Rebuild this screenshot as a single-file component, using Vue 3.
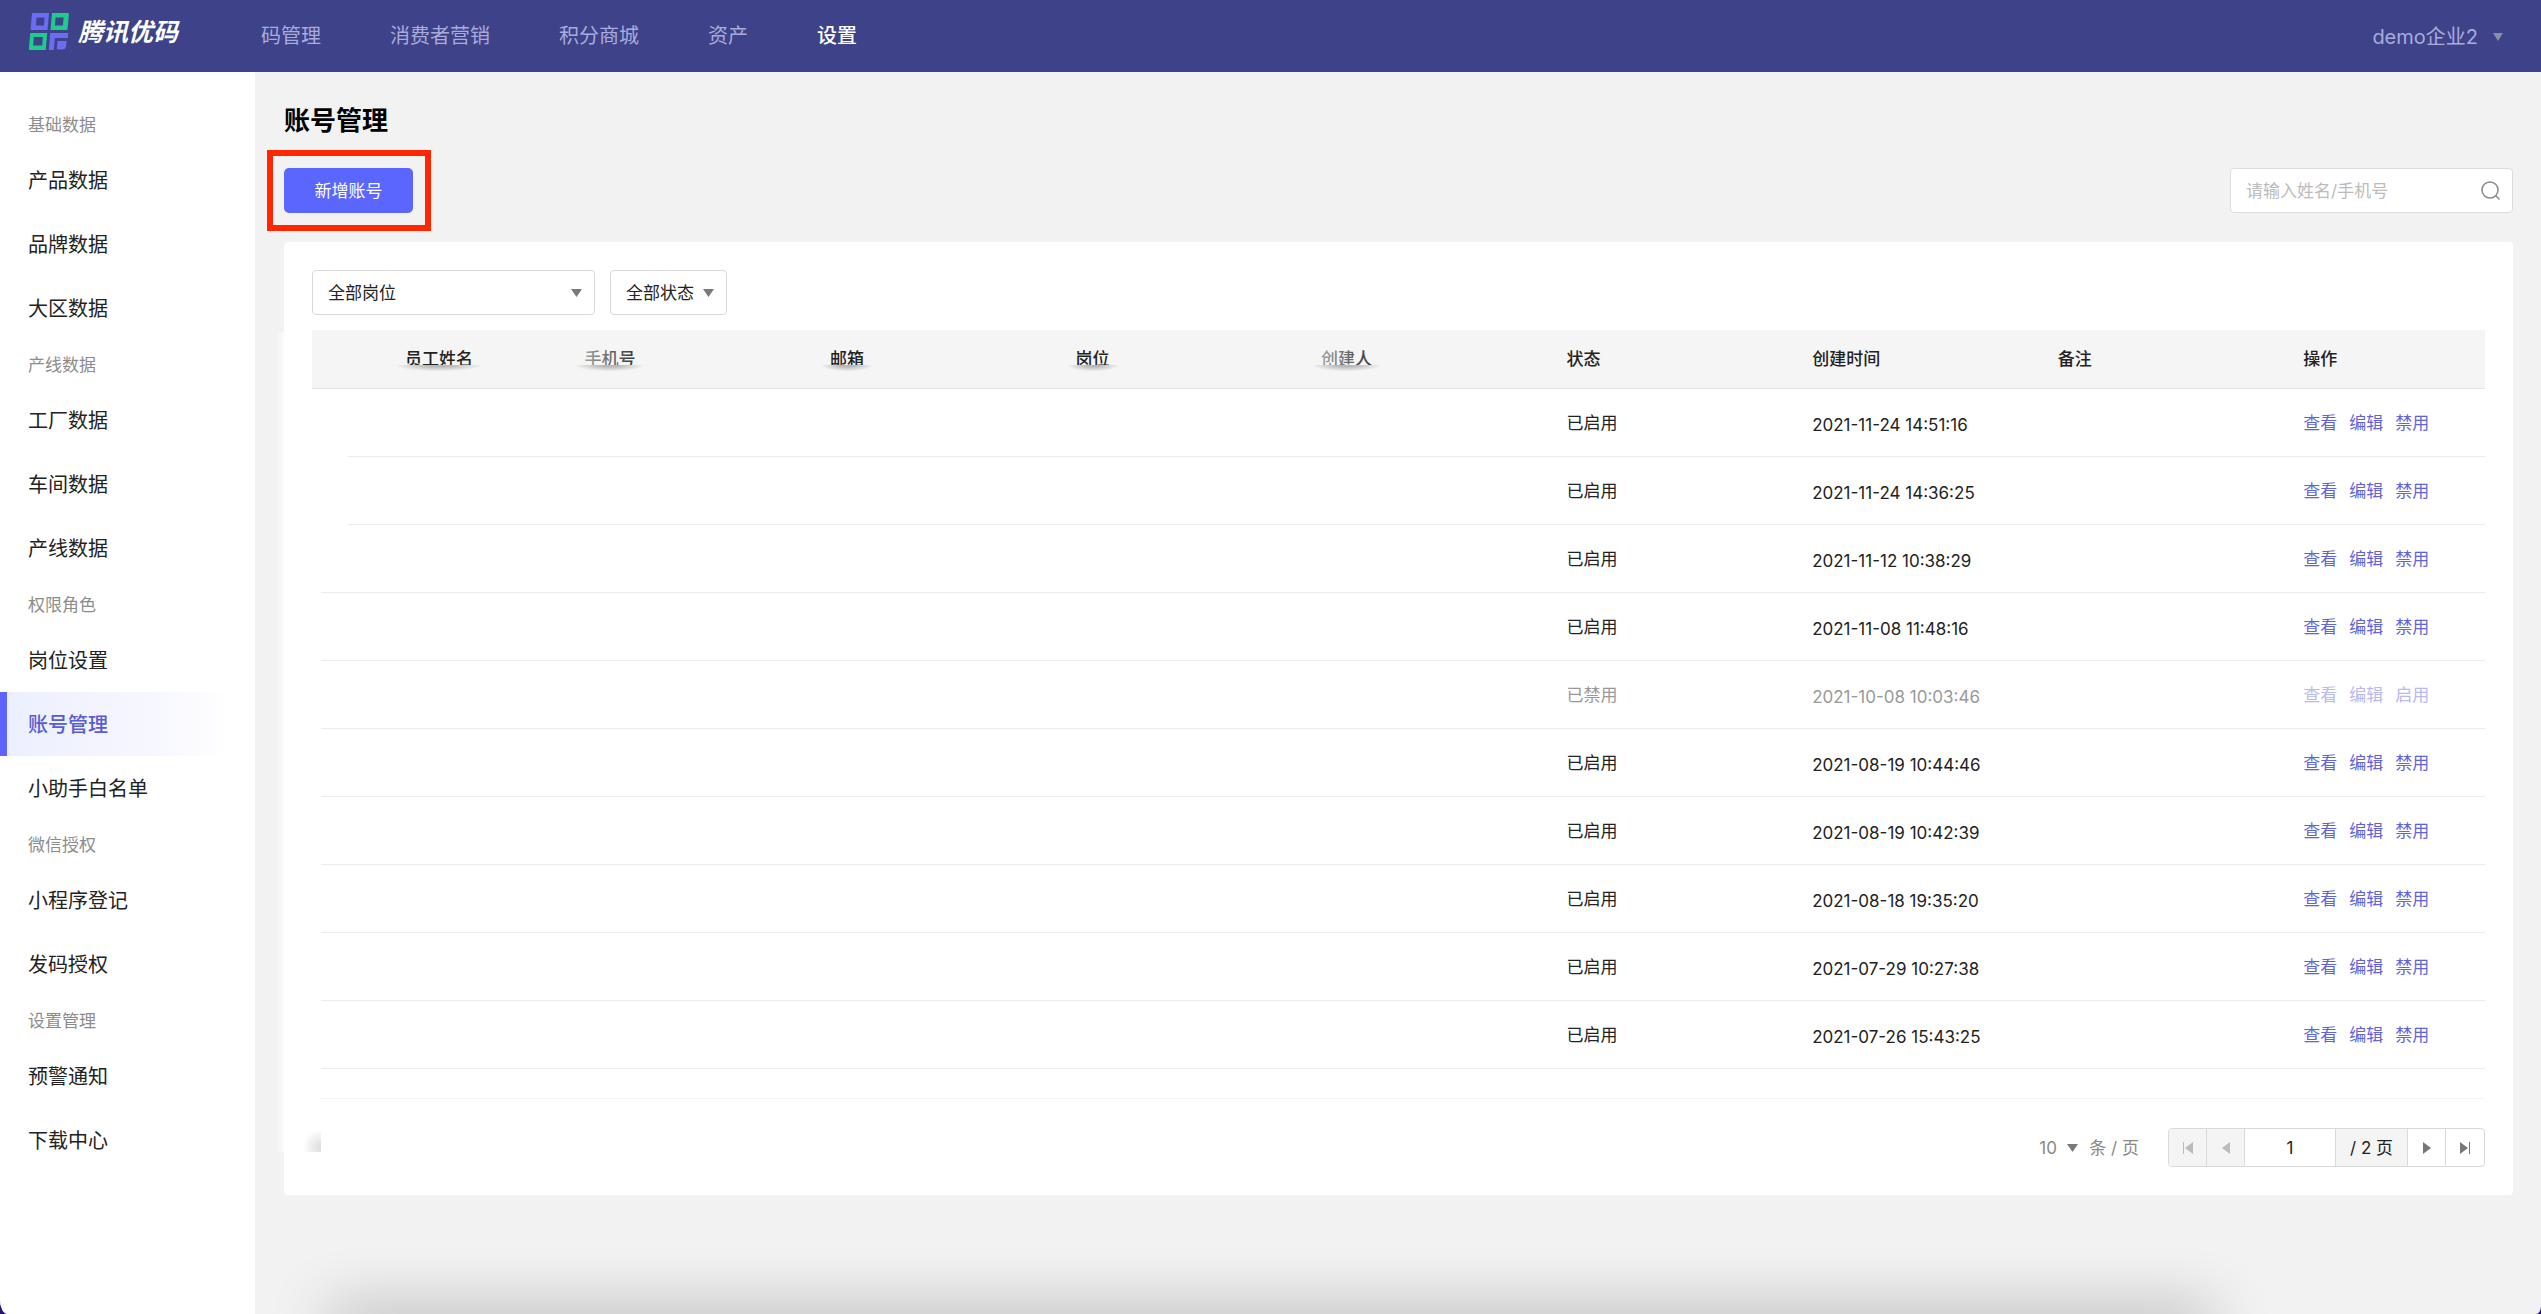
<template>
  <div class="page">

    <!-- 顶部导航 -->
    <header class="top-bar">
      <a href="#" class="brand">
        <svg class="brand-logo" width="42" height="40" viewBox="0 0 42 40" aria-hidden="true">
          <g transform="translate(4 1) skewX(-5)" fill-rule="evenodd">
            <path fill="#6a6cf6" d="M1 0H17V17H1a1 1 0 0 1-1-1V1a1 1 0 0 1 1-1ZM5 4.500V12.500H13V4.500Z" />
            <path fill="#1fcb8c" d="M20 0H36a1 1 0 0 1 1 1V16a1 1 0 0 1-1 1H20ZM24 4.500V12.500H32V4.500Z" />
            <path fill="#1fcb8c" d="M0 20H17V37H1a1 1 0 0 1-1-1ZM4 24V32.500H13V24Z" />
            <path fill="#6a6cf6" d="M20 20H38V25H25V37H20ZM28 28H37V33a3.500 3.500 0 0 1-3.500 3.500H28Z" />
          </g>
        </svg>
        <span class="brand-name">腾讯优码</span>
      </a>
      <nav class="top-nav">
        <a v-for="item in navItems" :key="item" href="#" :class="{ active: item === activeNav }" @click.prevent="activeNav = item">{{ item }}</a>
      </nav>
      <button class="company-btn">
        <span>demo企业2</span>
        <svg width="10" height="8" viewBox="0 0 10 8"><path fill="#8b8ca6" d="M0 0H10L5 8Z" /></svg>
      </button>
    </header>

    <div class="body">

      <!-- 左侧菜单 -->
      <aside class="side-menu">
        <div v-for="group in menuGroups" :key="group.title">
          <div class="menu-title">{{ group.title }}</div>
          <a v-for="item in group.items" :key="group.title + item" href="#" class="menu-item" :class="{ active: item === activeMenu }" @click.prevent="activeMenu = item">{{ item }}</a>
        </div>
      </aside>

      <!-- 右侧内容 -->
      <main class="content">
        <h1 class="page-title">账号管理</h1>

        <div class="toolbar">
          <div class="add-wrap">
            <button class="add-btn">新增账号</button>
          </div>
          <div class="search-box">
            <input v-model="keyword" type="text" placeholder="请输入姓名/手机号" aria-label="请输入姓名/手机号" />
            <svg width="20" height="20" viewBox="0 0 20 20" fill="none" stroke="#888" stroke-width="1.500">
              <circle cx="9" cy="9" r="8" />
              <path d="M14.500 14.500L18.500 18.500" />
            </svg>
          </div>
        </div>

        <section class="card">
          <div class="filters">
            <div class="select-box post">
              <select v-model="post" aria-label="岗位"><option>全部岗位</option></select>
              <svg width="11" height="8" viewBox="0 0 11 8"><path fill="#7a7a7a" d="M0 0H11L5.500 8Z" /></svg>
            </div>
            <div class="select-box status">
              <select v-model="status" aria-label="状态"><option>全部状态</option></select>
              <svg width="11" height="8" viewBox="0 0 11 8"><path fill="#7a7a7a" d="M0 0H11L5.500 8Z" /></svg>
            </div>
          </div>

          <table class="account-table">
            <thead>
              <tr>
                <th v-for="col in columns" :key="col.name" scope="col" :class="col.cell">
                  <span :class="col.style">{{ col.name }}</span>
                </th>
              </tr>
            </thead>
            <tbody>
              <tr v-for="row in rows" :key="row.time" :class="{ disabled: !row.enabled }">
                <td></td>
                <td></td>
                <td></td>
                <td></td>
                <td></td>
                <td>{{ row.enabled ? '已启用' : '已禁用' }}</td>
                <td class="time">{{ row.time }}</td>
                <td></td>
                <td>
                  <div class="actions">
                    <a href="#">查看</a>
                    <a href="#">编辑</a>
                    <a href="#">{{ row.enabled ? '禁用' : '启用' }}</a>
                  </div>
                </td>
              </tr>
            </tbody>
          </table>

          <!-- 分页 -->
          <div class="table-footer">
            <label class="page-size">
              <select v-model="pageSize"><option>10</option></select>
              <svg width="11" height="8" viewBox="0 0 11 8"><path fill="#7a7a7a" d="M0 0H11L5.500 8Z" /></svg>
              <span>条 / 页</span>
            </label>
            <div class="pager">
              <button disabled aria-label="首页">
                <svg width="10" height="12" viewBox="0 0 10 12"><path fill="#bbb" d="M0 0H1V12H0ZM10 0V12L2 6Z" /></svg>
              </button>
              <button disabled aria-label="上一页">
                <svg width="8" height="12" viewBox="0 0 8 12"><path fill="#bbb" d="M8 0V12L0 6Z" /></svg>
              </button>
              <input v-model="page" type="text" aria-label="页码" />
              <span class="total">/ 2 页</span>
              <button aria-label="下一页">
                <svg width="8" height="12" viewBox="0 0 8 12"><path fill="#777" d="M0 0V12L8 6Z" /></svg>
              </button>
              <button aria-label="末页">
                <svg width="10" height="12" viewBox="0 0 10 12"><path fill="#777" d="M9 0H10V12H9ZM0 0V12L8 6Z" /></svg>
              </button>
            </div>
          </div>
        </section>
      </main>
    </div>

    <div class="bottom-shadow"></div>
  </div>
</template>

<script setup>
import { ref } from 'vue';

const navItems = ['码管理', '消费者营销', '积分商城', '资产', '设置'];
const activeNav = ref('设置');

// 左侧菜单分组
const menuGroups = [
  { title: '基础数据', items: ['产品数据', '品牌数据', '大区数据'] },
  { title: '产线数据', items: ['工厂数据', '车间数据', '产线数据'] },
  { title: '权限角色', items: ['岗位设置', '账号管理', '小助手白名单'] },
  { title: '微信授权', items: ['小程序登记', '发码授权'] },
  { title: '设置管理', items: ['预警通知', '下载中心'] },
];
const activeMenu = ref('账号管理');

const keyword = ref('');
const post = ref('全部岗位');
const status = ref('全部状态');
const pageSize = ref('10');
const page = ref('1');

// 表头，smear 为下沿被涂抹的列
const columns = [
  { name: '员工姓名', cell: 'name-col', style: 'smear' },
  { name: '手机号', cell: 'col', style: 'smear faded' },
  { name: '邮箱', cell: 'col', style: 'smear' },
  { name: '岗位', cell: 'col', style: 'smear' },
  { name: '创建人', cell: 'col', style: 'smear faded' },
  { name: '状态', cell: 'col' },
  { name: '创建时间', cell: 'col' },
  { name: '备注', cell: 'col' },
  { name: '操作', cell: 'action-col' },
];

const rows = ref([
  { time: '2021-11-24 14:51:16', enabled: true },
  { time: '2021-11-24 14:36:25', enabled: true },
  { time: '2021-11-12 10:38:29', enabled: true },
  { time: '2021-11-08 11:48:16', enabled: true },
  { time: '2021-10-08 10:03:46', enabled: false },
  { time: '2021-08-19 10:44:46', enabled: true },
  { time: '2021-08-19 10:42:39', enabled: true },
  { time: '2021-08-18 19:35:20', enabled: true },
  { time: '2021-07-29 10:27:38', enabled: true },
  { time: '2021-07-26 15:43:25', enabled: true },
]);
</script>

<style>
body {
  margin: 0;
  background: #2a1378;
}
</style>

<style scoped>
.page,
.page * {
  box-sizing: border-box;
}

.page {
  position: relative;
  display: flex;
  flex-direction: column;
  min-height: 100vh;
  overflow: hidden;
  border-radius: 0 0 5px 8px / 0 0 8px 14px;
  background: #f2f2f2;
  color: #222;
  font-family: Inter, "Noto Sans CJK SC", sans-serif;
  font-size: 17px;
  line-height: 24px;
}

a {
  text-decoration: none;
}

button,
input,
select {
  margin: 0;
  padding: 0;
  border: none;
  background: none;
  color: inherit;
  font: inherit;
}

/* 顶部导航 */
.top-bar {
  display: flex;
  align-items: center;
  height: 72px;
  padding: 0 38px 0 28px;
  background: #3d4289;
}

.brand {
  display: flex;
  align-items: center;
  width: 233px;
  gap: 8px;
  padding-bottom: 8px;
}

.brand-name {
  color: #fff;
  font-size: 25px;
  font-style: italic;
  font-weight: 700;
  line-height: 32px;
}

.top-nav {
  display: flex;
  flex: 1;
  gap: 69px;
  font-size: 20px;
}

.top-nav a {
  color: #a9abdc;
}

.top-nav a.active {
  color: #fff;
  font-weight: 500;
}

.company-btn {
  display: flex;
  align-items: center;
  gap: 15px;
  padding-top: 2px;
  color: #a9abdc;
  font-size: 20px;
}

.body {
  display: flex;
  flex: 1;
}

/* 左侧菜单 */
.side-menu {
  flex: none;
  width: 255px;
  padding: 28px 0;
  background: #fff;
}

.menu-title {
  height: 48px;
  padding-left: 28px;
  color: #8c8c8c;
  line-height: 50px;
}

.menu-item {
  display: block;
  height: 64px;
  padding-left: 28px;
  color: #222;
  font-size: 20px;
  line-height: 67px;
}

.menu-item.active {
  padding-left: 21px;
  border-left: 7px solid #5c63ff;
  background: linear-gradient(90deg, #eceffe 0, #f7f7ff 150px, #fff 220px);
  color: #585cd6;
  font-weight: 500;
}

/* 右侧内容 */
.content {
  flex: 1;
  min-width: 0;
  padding: 29px 28px 60px 29px;
}

.page-title {
  margin: 0;
  color: #000;
  font-size: 26px;
  font-weight: 700;
  line-height: 40px;
}

.toolbar {
  display: flex;
  align-items: center;
  justify-content: space-between;
  margin: 27px 0 29px;
}

.add-wrap {
  position: relative;
}

/* 红色标注框 */
.add-wrap::after {
  position: absolute;
  inset: -18px -18px -18px -17px;
  border: 6px solid #ff2600;
  content: "";
  pointer-events: none;
}

.add-btn {
  display: block;
  width: 129px;
  height: 45px;
  border-radius: 5px;
  background: #5b66ff;
  color: #fff;
}

.search-box {
  display: flex;
  align-items: center;
  width: 283px;
  height: 45px;
  padding: 0 11px 0 15px;
  border: 1px solid #dcdcdc;
  border-radius: 4px;
  background: #fff;
}

.search-box input {
  flex: 1;
  min-width: 0;
  outline: none;
}

.search-box input::placeholder {
  color: #bbb;
}

.card {
  position: relative;
  padding: 28px;
  border-radius: 4px;
  background: #fff;
}

/* 左边缘的涂抹 */
.card::before {
  position: absolute;
  top: 90px;
  bottom: 43px;
  left: -8px;
  width: 8px;
  background: linear-gradient(90deg, #f2f2f2, #fcfcfc);
  content: "";
}

/* 左下角的涂抹残留 */
.card::after {
  position: absolute;
  bottom: 43px;
  left: 20px;
  width: 17px;
  height: 24px;
  background: radial-gradient(circle at 100% 80%, #dcdcdc, #fff 70%);
  content: "";
}

.filters {
  display: flex;
  gap: 15px;
  margin-bottom: 15px;
}

.select-box {
  position: relative;
  height: 45px;
  border: 1px solid #d9d9d9;
  border-radius: 4px;
}

.select-box.post {
  width: 283px;
}

.select-box.status {
  width: 117px;
}

.select-box select {
  width: 100%;
  height: 100%;
  padding-left: 15px;
  appearance: none;
}

.select-box svg {
  position: absolute;
  top: 18px;
  right: 12px;
  pointer-events: none;
}

/* 账号表格 */
.account-table {
  width: 100%;
  border-spacing: 0;
  table-layout: fixed;
  text-align: left;
}

.account-table th {
  height: 59px;
  padding: 0 0 0 16px;
  border-bottom: 1px solid #e2e2e2;
  background: #f5f5f5;
  font-weight: 500;
}

.account-table th.name-col {
  width: 11.8%;
  padding-left: 93px;
}

.account-table th.col {
  width: 11.3%;
}

.account-table td {
  height: 68px;
  padding: 0 0 0 16px;
  background: linear-gradient(#ebebeb, #ebebeb) no-repeat left bottom / 100% 1px;
}

.account-table td.time {
  padding-top: 3px;
}

.account-table td:first-child {
  background-position: 9px bottom;
}

.account-table tr:nth-child(-n+2) td:first-child {
  background-position: 36px bottom;
}

.smear {
  position: relative;
  display: inline-block;
}

.smear::after {
  position: absolute;
  right: -8px;
  bottom: 0;
  left: -8px;
  height: 6px;
  background: radial-gradient(ellipse at 50% 0, #b8b8b8 20%, #f5f5f5 75%);
  content: "";
}

.faded::before {
  position: absolute;
  inset: 0;
  background: linear-gradient(90deg, rgba(245, 245, 245, 0.6), rgba(245, 245, 245, 0.1));
  content: "";
}

.actions {
  display: flex;
  gap: 12px;
}

.actions a {
  color: #6064d8;
}

.disabled {
  color: #999;
}

.disabled .actions a {
  color: #b8b9f0;
}

/* 分页 */
.table-footer {
  display: flex;
  align-items: center;
  justify-content: flex-end;
  gap: 29px;
  margin: 29px 0 0 9px;
  padding-top: 29px;
  border-top: 1px solid #f4f4f4;
}

.page-size {
  display: flex;
  align-items: center;
  color: #888;
}

.page-size select {
  width: 20px;
  margin-right: 8px;
  appearance: none;
}

.page-size span {
  margin-left: 11px;
}

.pager {
  display: flex;
  height: 39px;
  overflow: hidden;
  border: 1px solid #d9d9d9;
  border-radius: 4px;
}

.pager > * {
  display: flex;
  align-items: center;
  justify-content: center;
  border-right: 1px solid #d9d9d9;
}

.pager > :last-child {
  border-right: none;
}

.pager button {
  width: 38px;
}

.pager button:disabled,
.pager .total {
  background: #f4f4f4;
}

.pager input {
  width: 91px;
  text-align: center;
}

.pager .total {
  width: 72px;
}

/* 窗口底部阴影 */
.bottom-shadow {
  position: absolute;
  right: 13%;
  bottom: -20px;
  left: 13%;
  height: 20px;
  box-shadow: 0 0 60px rgba(0, 0, 0, 0.45);
  pointer-events: none;
}
</style>
